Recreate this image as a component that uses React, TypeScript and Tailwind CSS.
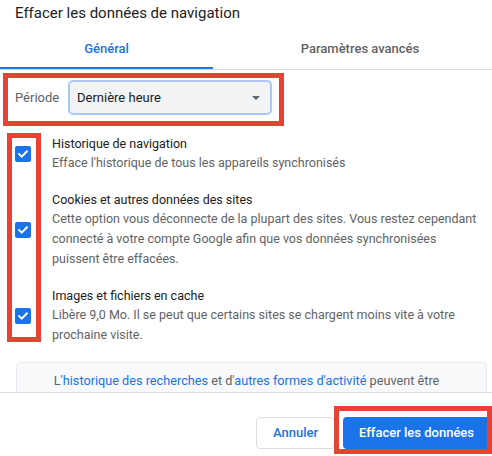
import { ReactNode } from "react";

const items = [
  {
    title: "Historique de navigation",
    desc: "Efface l'historique de tous les appareils synchronisés",
  },
  {
    title: "Cookies et autres données des sites",
    desc: "Cette option vous déconnecte de la plupart des sites. Vous restez cependant connecté à votre compte Google afin que vos données synchronisées puissent être effacées.",
  },
  {
    title: "Images et fichiers en cache",
    desc: "Libère 9,0 Mo. Il se peut que certains sites se chargent moins vite à votre prochaine visite.",
  },
];

function Checkbox() {
  return (
    <span className="flex h-4 w-4 shrink-0 items-center justify-center rounded-[2px] bg-[#1a73e8]">
      <svg width="12" height="12" viewBox="0 0 12 12" fill="none">
        <path d="M2.2 6.1l2.5 2.5 5.1-5.1" stroke="white" strokeWidth="2" strokeLinecap="square" />
      </svg>
    </span>
  );
}

function Link({ children }: { children: ReactNode }) {
  return <span className="text-[#1a73e8]">{children}</span>;
}

export default function App() {
  return (
    <div className="relative flex h-[456px] w-[492px] flex-col overflow-hidden bg-white font-['Roboto',sans-serif] text-[13px] text-[#202124]">
      <h1 className="h-[28px] shrink-0 pl-[15px] pt-[3px] text-[15px] leading-[20px] font-normal">
        Effacer les données de navigation
      </h1>

      <div className="flex h-[42px] shrink-0 border-b border-[#dadce0] font-medium">
        <div className="flex w-[213px] shrink-0 items-center justify-center text-[#1a73e8] shadow-[inset_0_-2px_0_#1a73e8]">
          Général
        </div>
        <div className="flex w-[294px] shrink-0 items-center justify-center text-[#5f6368]">
          Paramètres avancés
        </div>
      </div>

      <div className="h-[322px] shrink-0 overflow-hidden pt-[10px]">
        <div className="flex items-center pl-[15px]">
          <span className="w-[53px] text-[#5f6368]">Période</span>
          <div className="flex h-[35px] w-[204px] items-center justify-between rounded-[5px] border-2 border-[#aac7f5] bg-[#f1f3f4] pl-[7px] pr-[10px]">
            <span>Dernière heure</span>
            <svg width="8" height="4" viewBox="0 0 8 4">
              <path d="M0 0h8L4 4z" fill="#5f6368" />
            </svg>
          </div>
        </div>

        <div className="mt-[19px] flex flex-col gap-[17px]">
          {items.map((item) => (
            <div key={item.title} className="flex items-center gap-[21px] pl-[15px]">
              <Checkbox />
              <div className="w-[429px] text-[12.5px]">
                <p className="leading-[19px]">{item.title}</p>
                <p className="leading-[20px] text-[#5f6368]">{item.desc}</p>
              </div>
            </div>
          ))}
        </div>

        <div className="ml-[16px] mt-[17px] w-[471px] rounded-[4px] border border-[#e8eaed] bg-[#f8f9fa] pb-[8px] pl-[16px] pr-[26px] pt-[8px] text-center text-[12.7px] leading-[20px] text-[#5f6368]">
          <p>
            L'<Link>historique des recherches</Link> et d'<Link>autres formes d'activité</Link> peuvent être
          </p>
        </div>
      </div>

      <div className="flex h-[64px] shrink-0 items-start justify-end gap-[8px] border-t border-[#dadce0] pr-[2px] pt-[24px] font-medium">
        <button className="h-[32px] rounded-[4px] border border-[#dadce0] bg-white px-[16px] text-[#1a73e8]">
          Annuler
        </button>
        <button className="h-[32px] rounded-[4px] bg-[#1a73e8] px-[16px] text-white">
          Effacer les données
        </button>
      </div>

      {/* annotation frames */}
      <div className="pointer-events-none absolute left-[3px] top-[73px] h-[53px] w-[281px] border-[5px] border-[#e94235]" />
      <div className="pointer-events-none absolute left-[7px] top-[133px] h-[209px] w-[34px] border-[5px] border-[#e94235]" />
      <div className="pointer-events-none absolute left-[334px] top-[406px] h-[48px] w-[158px] border-[5px] border-[#e94235]" />
    </div>
  );
}
